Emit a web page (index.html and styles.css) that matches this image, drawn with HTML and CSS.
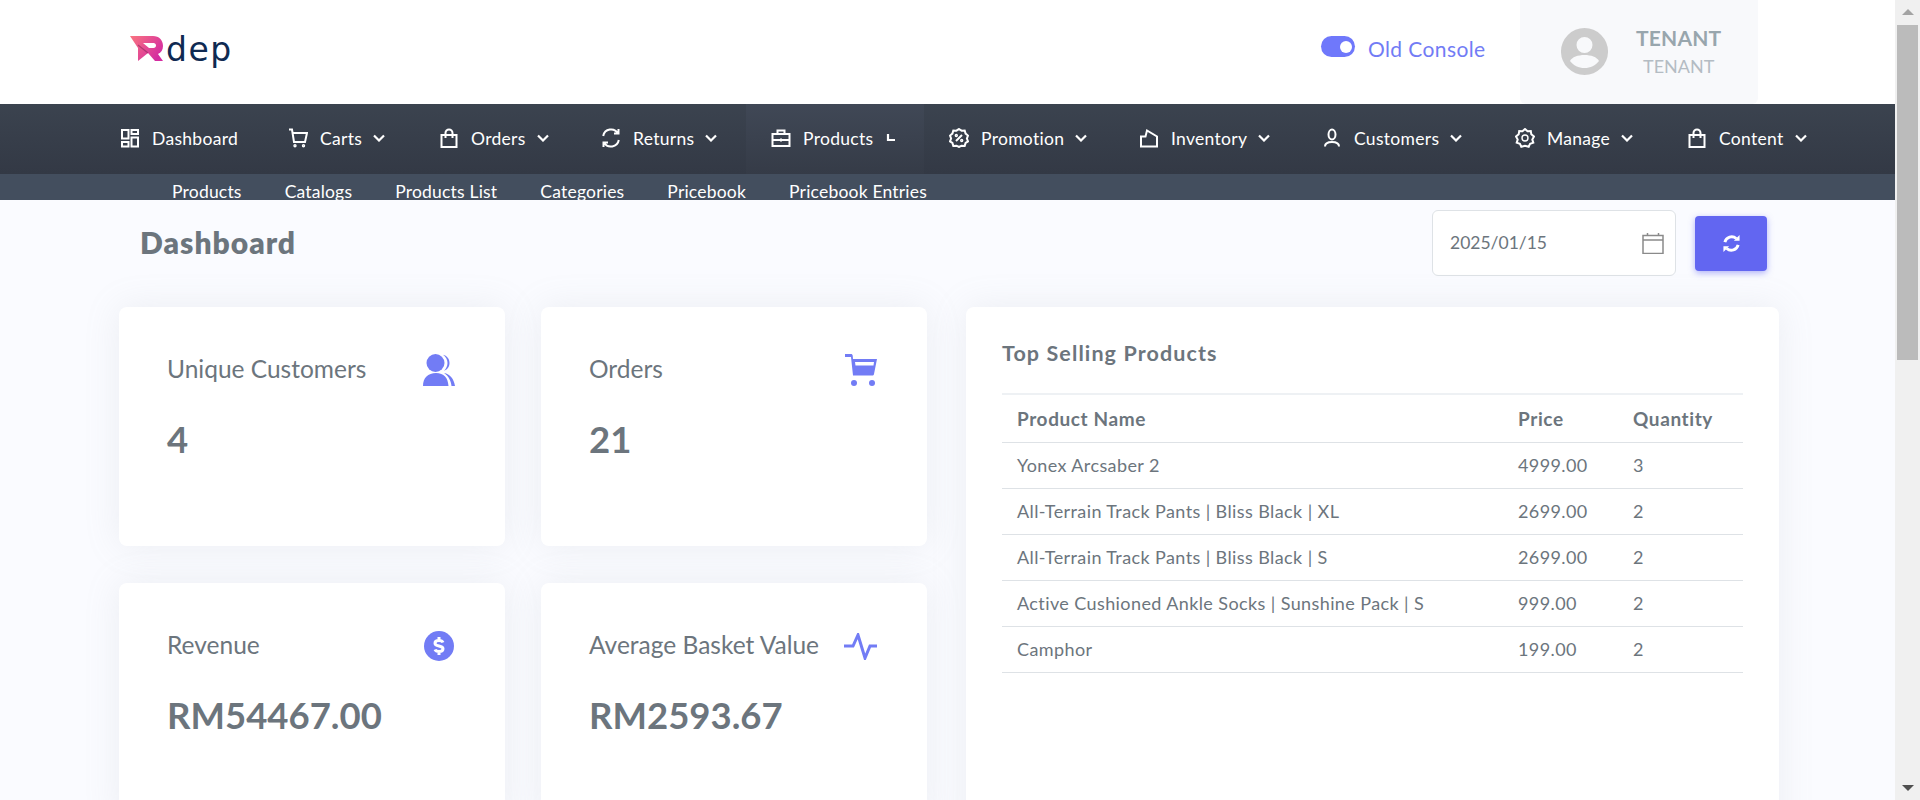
FILE: index.html
```html
<!DOCTYPE html>
<html lang="en">
<head>
<meta charset="utf-8">
<title>Dashboard</title>
<link rel="stylesheet" href="styles.css">
</head>
<body>
<div class="app">
  <div class="page">
    <header class="topbar">
      <div class="logo">
        <svg class="logo-mark" viewBox="0 0 33 25" width="33" height="25">
          <defs><linearGradient id="lg" x1="0" y1="0" x2="1" y2="0.6"><stop offset="0" stop-color="#fa7580"/><stop offset="1" stop-color="#d42ca0"/></linearGradient></defs>
          <path fill="url(#lg)" fill-rule="evenodd" d="M0 0H23C29 0 33 4 33 10C33 14 31 16.500 28 18L33 25H25L18 17L8 25V12ZM13 7H23.500C25 7 26 8 26 9.500C26 11 25 12 23.500 12H19Z"/>
          <path fill="none" stroke="#8a2a5c" stroke-width="1.200" opacity=".6" d="M8 9L18 17"/>
        </svg>
        <span class="logo-text">dep</span>
      </div>
      <div class="top-right">
        <span class="toggle"><span class="toggle-knob"></span></span>
        <span class="console">Old Console</span>
        <div class="user">
          <svg class="avatar" viewBox="0 0 47 47" width="47" height="47"><path fill="#ccc" fill-rule="evenodd" d="M23.500 0a23.500 23.500 0 1 0 0 47a23.500 23.500 0 1 0 0-47ZM23.500 9a8 8 0 1 1 0 16a8 8 0 1 1 0-16ZM23.500 40c-6 0-11-2.500-14.500-7c2-4 8-6 14.500-6s12.500 2 14.500 6c-3.500 4.500-8.500 7-14.500 7Z"/></svg>
          <div class="user-text"><div class="user-name">TENANT</div><div class="user-role">TENANT</div></div>
        </div>
      </div>
    </header>

    <nav class="nav">
      <a class="nav-item">
        <svg class="ni ni-n" viewBox="1 0 18 20"><path d="M2 2h6.500v8.500H2zM11.500 2H18v4h-6.500zM2 14h6.500v4.500H2zM11.500 9.500H18v9h-6.500z"/></svg>
        <span>Dashboard</span>
      </a>
      <a class="nav-item">
        <svg class="ni" viewBox="0 0 20 20"><path d="M1 1.500h3L6 14h11l2-9H4.800"/><circle cx="7" cy="17.800" r="1" /><circle cx="15.500" cy="17.800" r="1"/></svg>
        <span>Carts</span>
        <svg class="chev" viewBox="0 0 12 8"><path d="M1 1.500l5 5 5-5"/></svg>
      </a>
      <a class="nav-item">
        <svg class="ni ni-n" viewBox="1 0 18 20"><path d="M2.500 7h15v12h-15zM6.500 10V5a3.500 3.500 0 0 1 7 0v5"/></svg>
        <span>Orders</span>
        <svg class="chev" viewBox="0 0 12 8"><path d="M1 1.500l5 5 5-5"/></svg>
      </a>
      <a class="nav-item">
        <svg class="ni" viewBox="0 0 20 20"><path d="M17 5.500A8 8 0 0 0 2.200 8M3 14.500A8 8 0 0 0 17.800 12M13 5.500h4.500V1M7 14.500H2.500V19"/></svg>
        <span>Returns</span>
        <svg class="chev" viewBox="0 0 12 8"><path d="M1 1.500l5 5 5-5"/></svg>
      </a>
      <a class="nav-item is-open">
        <svg class="ni" viewBox="0 0 20 20"><path d="M1.500 6h17v12h-17zM6.500 6V2.500h7V6M1.500 12h17M10 10.500v3"/></svg>
        <span>Products</span>
        <svg class="caret" viewBox="0 0 12 8"><path d="M2 0v6h7"/></svg>
      </a>
      <a class="nav-item">
        <svg class="ni" viewBox="0 0 20 20"><path d="M10 1l2.600 1.700 3.100-.1.900 3 2.400 2-1.100 2.900 1.100 2.900-2.400 1.500-.9 3-3.100-.2L10 19l-2.600-1.300-3.100.2-.9-3L1 13.400l1.100-2.900L1 7.600l2.400-2 .9-3 3.100.1zM7 13l6-6"/><circle cx="7.300" cy="7.500" r="1"/><circle cx="12.700" cy="12.500" r="1"/></svg>
        <span>Promotion</span>
        <svg class="chev" viewBox="0 0 12 8"><path d="M1 1.500l5 5 5-5"/></svg>
      </a>
      <a class="nav-item">
        <svg class="ni ni-n" viewBox="1 0 18 20"><path d="M2 18.500V8.500h4.500L8 2.500l10 6v10zM2 18.500h16"/></svg>
        <span>Inventory</span>
        <svg class="chev" viewBox="0 0 12 8"><path d="M1 1.500l5 5 5-5"/></svg>
      </a>
      <a class="nav-item">
        <svg class="ni ni-c" viewBox="2 0 16 20"><ellipse cx="10" cy="6.500" rx="3.500" ry="5"/><path d="M3 18.500c0-3 3-4.500 7-4.500s7 1.500 7 4.500"/></svg>
        <span>Customers</span>
        <svg class="chev" viewBox="0 0 12 8"><path d="M1 1.500l5 5 5-5"/></svg>
      </a>
      <a class="nav-item">
        <svg class="ni" viewBox="0 0 20 20"><path d="M10 1l2.500 2.300 3.300-.3.500 3.300L19 8.500 17.300 11.500l1 3.200-3.200 1-1.400 3-3.700-1-3.700 1-1.400-3-3.200-1 1-3.200L1 8.500l2.700-2.200L4.200 3l3.300.3z"/><circle cx="10" cy="10" r="3"/></svg>
        <span>Manage</span>
        <svg class="chev" viewBox="0 0 12 8"><path d="M1 1.500l5 5 5-5"/></svg>
      </a>
      <a class="nav-item">
        <svg class="ni ni-n" viewBox="1 0 18 20"><path d="M2.500 7h15v12h-15zM6.500 10V5a3.500 3.500 0 0 1 7 0v5"/></svg>
        <span>Content</span>
        <svg class="chev" viewBox="0 0 12 8"><path d="M1 1.500l5 5 5-5"/></svg>
      </a>
    </nav>

    <div class="subnav">
      <a>Products</a><a>Catalogs</a><a>Products List</a><a>Categories</a><a>Pricebook</a><a>Pricebook Entries</a>
    </div>

    <main class="main">
      <div class="title-row">
        <h1 class="title">Dashboard</h1>
        <div class="date-box">
          <span>2025/01/15</span>
          <svg class="cal" viewBox="0 0 22 22"><path d="M1 3.500h20v18H1zM1 8h20M5.500 1v3M16.500 1v3"/></svg>
        </div>
        <button class="refresh" type="button">
          <svg viewBox="0 0 20 20" width="19" height="19"><path d="M3 8.500A7.300 7.300 0 0 1 15 4.800M17 11.500A7.300 7.300 0 0 1 5 15.200"/><path class="fill" d="M12.500 7h6V1zM7.500 13h-6v6z"/></svg>
        </button>
      </div>
      <div class="content">
        <section class="stats">
          <article class="card stat">
            <div class="stat-head"><span class="stat-title">Unique Customers</span>
              <svg class="si" viewBox="0 0 32 32"><circle cx="12.500" cy="9" r="9"/><path d="M0 32c0-8 5-13 13-13s12 5 12.500 13zM20 .8c4 .8 6.500 4.200 6.500 8.200s-2.500 6.800-5.500 7.800c2-2 3.500-4.800 3.500-7.800S23 3 20 .8zM21 19c6 1 10 6 11 13h-3.500c-.5-5-3-10-7.500-13z"/></svg>
            </div>
            <div class="stat-value">4</div>
          </article>
          <article class="card stat">
            <div class="stat-head"><span class="stat-title">Orders</span>
              <svg class="si" viewBox="0 0 32 32"><path d="M0 0h6c1 0 1.500.6 1.700 1.500L8 5h24l-3 15c-.2 1-.8 1.500-2 1.500H8L6 3H0zM10 8l.5 3.500h18L29 8z" fill-rule="evenodd"/><circle cx="9" cy="29" r="3"/><circle cx="27" cy="29" r="3"/></svg>
            </div>
            <div class="stat-value">21</div>
          </article>
          <article class="card stat">
            <div class="stat-head"><span class="stat-title">Revenue</span>
              <svg class="si si-dollar" viewBox="0 0 30 30"><circle cx="15" cy="15" r="15"/><path class="dollar" d="M19 11.500c-.5-1.200-2-2-4-2-2.400 0-4 1-4 2.700s1.600 2.300 4 2.800 4 1.100 4 2.800-1.600 2.700-4 2.700c-2 0-3.500-.8-4-2M15 6v3.500M15 20.500V24"/></svg>
            </div>
            <div class="stat-value">RM54467.00</div>
          </article>
          <article class="card stat">
            <div class="stat-head"><span class="stat-title">Average Basket Value</span>
              <svg class="si si-wave" viewBox="0 0 33 27"><path d="M0 13h9L14 2l7 23 5-12h7"/></svg>
            </div>
            <div class="stat-value">RM2593.67</div>
          </article>
        </section>
        <section class="card top-products">
          <h2 class="top-title">Top Selling Products</h2>
          <table class="table">
            <colgroup><col class="c-name"><col class="c-price"><col class="c-qty"></colgroup>
            <thead><tr><th>Product Name</th><th>Price</th><th>Quantity</th></tr></thead>
            <tbody>
              <tr><td>Yonex Arcsaber 2</td><td>4999.00</td><td>3</td></tr>
              <tr><td>All-Terrain Track Pants | Bliss Black | XL</td><td>2699.00</td><td>2</td></tr>
              <tr><td>All-Terrain Track Pants | Bliss Black | S</td><td>2699.00</td><td>2</td></tr>
              <tr><td>Active Cushioned Ankle Socks | Sunshine Pack | S</td><td>999.00</td><td>2</td></tr>
              <tr><td>Camphor</td><td>199.00</td><td>2</td></tr>
            </tbody>
          </table>
        </section>
      </div>
    </main>
  </div>
  <div class="scrollbar">
    <div class="sb-btn"><span class="arrow-up"></span></div>
    <div class="sb-thumb"></div>
    <div class="sb-track"></div>
    <div class="sb-btn"><span class="arrow-down"></span></div>
  </div>
</div>
</body>
</html>
```

FILE: styles.css
```css
* { box-sizing: border-box; }
html, body { margin: 0; height: 800px; overflow: hidden; }
body { font-family: "Lato", "Noto Sans", sans-serif; color: #6c757d; background: #fff; }
.app { display: flex; height: 800px; overflow: hidden; }
.page { width: 1895px; flex: none; display: flex; flex-direction: column; height: 800px; overflow: hidden; }

/* scrollbar */
.scrollbar { width: 25px; flex: none; display: flex; flex-direction: column; background: #f0f0f0; }
.sb-btn { height: 25px; flex: none; display: flex; align-items: center; justify-content: center; }
.sb-thumb { height: 335px; margin: 0 2px; background: #bbb; flex: none; }
.sb-track { flex: 1; }
.arrow-up { width: 0; height: 0; border-left: 6px solid transparent; border-right: 6px solid transparent; border-bottom: 6px solid #a3a3a3; margin-top: -1px; }
.arrow-down { width: 0; height: 0; border-left: 6px solid transparent; border-right: 6px solid transparent; border-top: 6px solid #505050; margin-top: 1px; }

/* top bar */
.topbar { height: 104px; flex: none; display: flex; justify-content: space-between; background: #fff; padding: 0 137px 0 130px; }
.logo { display: flex; align-items: flex-start; padding-top: 36px; gap: 3px; }
.logo-mark { display: block; }
.logo-text { font-family: "DejaVu Sans", sans-serif; font-size: 33px; line-height: 30px; letter-spacing: 1.500px; color: #0f2a52; margin-top: -1px; }
.top-right { display: flex; align-items: center; }
.toggle { width: 34px; height: 21px; border-radius: 11px; background: #6f78fb; display: flex; align-items: center; justify-content: flex-end; padding-right: 3px; margin-top: -11px; margin-right: 13px; }
.toggle-knob { width: 12px; height: 12px; border-radius: 50%; background: #fff; }
.console { font-size: 21px; letter-spacing: .4px; color: #727cf5; width: 152px; margin-top: -7px; }
.user { width: 238px; height: 104px; background: #f8f9fb; border-radius: 0 0 6px 6px; display: flex; align-items: flex-start; padding: 28px 0 0 41px; }
.avatar { display: block; flex: none; }
.user-text { margin-left: 28px; text-align: center; }
.user-name { font-size: 21px; letter-spacing: .2px; font-weight: 700; color: #98a6ad; line-height: 24px; margin-top: -2px; }
.user-role { font-size: 18px; color: #b4bcc3; line-height: 24px; margin-top: 4px; }

/* nav */
.nav { height: 70px; flex: none; display: grid; grid-template-columns: 167px 152px 161px 170px 178px 191px 184px 191px 173px 166px; padding-left: 96px; background: linear-gradient(#3b434f, #333945); }
.nav-item { display: flex; align-items: center; padding: 0 0 2px 25px; color: #fff; font-size: 17.500px; letter-spacing: .3px; }
.nav-item.is-open { background: linear-gradient(#404856, #353b47); }
.ni { width: 20px; height: 20px; flex: none; fill: none; stroke: #fff; stroke-width: 2; margin-right: 12px; }
.ni-n { width: 18px; margin-right: 13px; }
.ni-c { width: 16px; margin-right: 14px; }
.ni circle { stroke-width: 1.400; }
.chev { width: 12px; height: 8px; flex: none; fill: none; stroke: #fff; stroke-width: 2.200; margin-left: 11px; }
.caret { width: 12px; height: 8px; flex: none; fill: none; stroke: #fff; stroke-width: 2.200; margin-left: 13px; }
.subnav { height: 26px; flex: none; overflow: hidden; background: #434e5e; color: #fff; display: flex; gap: 43px; padding-left: 172px; font-size: 17.500px; letter-spacing: .2px; line-height: 36px; }
.subnav a { display: block; }

/* main */
.main { flex: 1; min-height: 0; overflow: hidden; background: #fafbff; }
.title-row { display: flex; align-items: center; height: 66px; margin: 10px 128px 31px 140px; }
.title { margin: 0 auto 2px 0; font-size: 30px; letter-spacing: 1px; font-weight: 800; color: #6c757d; }
.date-box { width: 244px; height: 66px; background: #fff; border: 1px solid #dee2e6; border-radius: 6px; display: flex; align-items: center; justify-content: space-between; padding: 0 11px 0 17px; font-size: 17.500px; color: #6c757d; }
.date-box span { margin-bottom: 2px; }
.cal { width: 22px; height: 22px; fill: none; stroke: #8a8a8a; stroke-width: 1.500; }
.refresh { width: 72px; height: 55px; margin-left: 19px; border: 0; border-radius: 4px; background: #6266f1; box-shadow: 0 2px 6px rgba(98, 102, 241, .5); padding: 0; display: flex; align-items: center; justify-content: center; }
.refresh svg { fill: none; stroke: #fff; stroke-width: 3; }
.refresh .fill { fill: #fff; stroke: none; }
.content { display: flex; align-items: flex-start; padding-left: 119px; }
.stats { display: grid; grid-template-columns: 386px 386px; grid-auto-rows: 239px; column-gap: 36px; row-gap: 37px; flex: none; }
.card { background: #fff; border-radius: 8px; box-shadow: 0 0 35px rgba(154, 161, 171, .15); }
.stat { padding: 47px 48px 0; }
.stat-head { display: flex; justify-content: space-between; align-items: center; height: 32px; }
.stat-title { font-size: 24.500px; color: #6c757d; margin-top: -4px; white-space: nowrap; }
.si { width: 32px; height: 32px; fill: #727cf5; flex: none; margin-right: 2px; }
.si-dollar { width: 30px; height: 30px; margin-right: 3px; }
.dollar { fill: none; stroke: #fff; stroke-width: 3; }
.si-wave { width: 33px; height: 27px; fill: none; stroke: #727cf5; stroke-width: 3; margin-right: 2px; }
.stat-value { font-size: 36.500px; font-weight: 700; color: #6c757d; margin-top: 31px; line-height: 44px; }
.top-products { width: 813px; margin-left: 39px; height: 800px; padding: 0 36px; flex: none; }
.top-title { margin: 34px 0 0; font-size: 21.500px; letter-spacing: 1.100px; font-weight: 700; line-height: 24px; color: #6c757d; }
.table { width: 741px; table-layout: fixed; border-collapse: collapse; margin-top: 28px; border-top: 2px solid #eef1f4; font-size: 18px; letter-spacing: .4px; }
.c-name { width: 501px; }
.c-price { width: 115px; }
.c-qty { width: 125px; }
.table th { height: 48px; padding: 0 15px; text-align: left; font-size: 19px; letter-spacing: .6px; font-weight: 700; color: #6c757d; border-bottom: 1px solid #dee2e6; }
.table td { height: 46px; padding: 0 15px; color: #6c757d; border-bottom: 1px solid #dee2e6; }
```
